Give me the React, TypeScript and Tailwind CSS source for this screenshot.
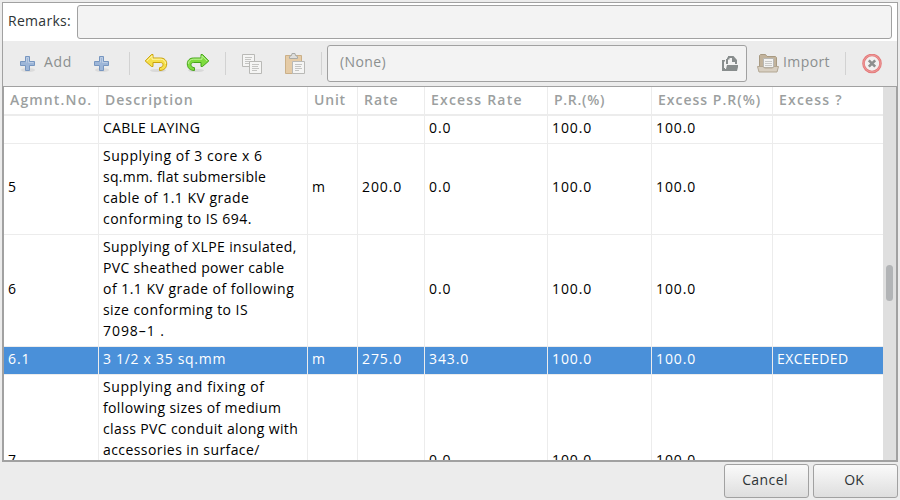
import React from 'react';

const GRID = 'grid grid-cols-[95px_209px_50px_67px_123px_104px_121px_110px]';

type Line = [text: string, tracking: string];

type Row = {
  no: string;
  desc: Line[];
  unit?: string;
  rate?: string;
  excess: string;
  pr: string;
  epr: string;
  flag?: string;
  selected?: boolean;
  height: string;
};

const rows: Row[] = [
  { no: '', desc: [['CABLE LAYING', 'tracking-[0.25px]']], excess: '0.0', pr: '100.0', epr: '100.0', height: 'h-[28px]' },
  {
    no: '5',
    desc: [
      ['Supplying of 3 core x 6', 'tracking-[0.55px]'],
      ['sq.mm. flat submersible', 'tracking-[0.25px]'],
      ['cable of 1.1 KV grade', 'tracking-[0.48px]'],
      ['conforming to IS 694.', 'tracking-[0.48px]'],
    ],
    unit: 'm', rate: '200.0', excess: '0.0', pr: '100.0', epr: '100.0', height: 'h-[91px]',
  },
  {
    no: '6',
    desc: [
      ['Supplying of XLPE insulated,', 'tracking-[0.38px]'],
      ['PVC sheathed power cable', 'tracking-[0.34px]'],
      ['of 1.1 KV grade of following', 'tracking-[0.48px]'],
      ['size conforming to IS', 'tracking-[0.44px]'],
      ['7098–1 .', 'tracking-[0.95px]'],
    ],
    excess: '0.0', pr: '100.0', epr: '100.0', height: 'h-[112px]',
  },
  {
    no: '6.1', desc: [['3 1/2 x 35 sq.mm', 'tracking-[0.7px]']], unit: 'm', rate: '275.0', excess: '343.0', pr: '100.0', epr: '100.0',
    flag: 'EXCEEDED', selected: true, height: 'h-[28px]',
  },
  {
    no: '7',
    desc: [
      ['Supplying and fixing of', 'tracking-[0.59px]'],
      ['following sizes of medium', 'tracking-[0.37px]'],
      ['class PVC conduit along with', 'tracking-[0.37px]'],
      ['accessories in surface/', 'tracking-[0.42px]'],
    ],
    excess: '0.0', pr: '100.0', epr: '100.0', height: 'h-[175px]',
  },
];

const headers: Line[] = [
  ['Agmnt.No.', 'tracking-[1.15px]'],
  ['Description', 'tracking-[1px]'],
  ['Unit', 'tracking-[0.8px]'],
  ['Rate', 'tracking-[1px]'],
  ['Excess Rate', 'tracking-[1.2px]'],
  ['P.R.(%)', 'tracking-[0.7px]'],
  ['Excess P.R(%)', 'tracking-[1px]'],
  ['Excess ?', 'tracking-[1.2px]'],
];

function PlusIcon() {
  return (
    <svg width="18" height="20" viewBox="0 0 18 20" className="block shrink-0">
      <ellipse cx="9" cy="16" rx="7" ry="2" fill="#000" opacity=".07" />
      <path d="M6.500 2.500h4v5h5v4h-5v5h-4v-5h-5v-4h5z" fill="#9db6d8" stroke="#7796c0" strokeLinejoin="round" />
      <path d="M7.500 8.500v-5h2v5h5" fill="none" stroke="#bccde4" />
    </svg>
  );
}

function UndoIcon() {
  return (
    <svg width="24" height="22" viewBox="0 0 24 22" className="block shrink-0">
      <ellipse cx="14" cy="17.500" rx="8" ry="1.600" fill="#000" opacity=".08" />
      <path d="M1.200 8 7.500 1.500h1.500v3.500h7.500c3.600 0 6.200 2.200 6.200 5.800 0 4.200-2.700 6.700-7.200 6.700v-2.800c2.300-.2 3.500-1.300 3.500-3 0-1.500-1-2.200-2.600-2.200H9v4H7.500z" fill="#f6e04a" stroke="#c9a20c" strokeLinejoin="round" />
      <path d="M2.800 8 8 2.800v3.400h8.500c2.900 0 5 1.700 5 4.600" fill="none" stroke="#fff6ae" />
    </svg>
  );
}

function RedoIcon() {
  return (
    <svg width="24" height="22" viewBox="0 0 24 22" className="block shrink-0">
      <ellipse cx="10" cy="17.500" rx="8" ry="1.600" fill="#000" opacity=".08" />
      <path d="M22.800 8 16.500 1.500H15V5H7.500c-3.600 0-6.200 2.200-6.200 5.800 0 4.200 2.700 6.700 7.200 6.700v-2.800c-2.300-.2-3.500-1.300-3.500-3 0-1.500 1-2.200 2.600-2.200H15v4h1.500z" fill="#7fdc3f" stroke="#46a51b" strokeLinejoin="round" />
      <path d="M21.200 8 16 2.800v3.400H7.500c-2.900 0-5 1.700-5 4.600" fill="none" stroke="#c2f29d" />
    </svg>
  );
}

function CopyIcon() {
  return (
    <svg width="22" height="22" viewBox="0 0 22 22" className="block shrink-0">
      <path d="M1.500 1.500h12v12h-12z" fill="#f5f5f4" stroke="#b9b9b6" />
      <path d="M4 4.500h7M4 6.500h6M4 8.500h7M4 10.500h4" stroke="#c4c4c2" />
      <path d="M8.500 8.500h12v12h-12z" fill="#f5f5f4" stroke="#b9b9b6" />
      <path d="M11 11.500h7M11 13.500h6M11 15.500h7M11 17.500h5" stroke="#c4c4c2" />
    </svg>
  );
}

function PasteIcon() {
  return (
    <svg width="22" height="22" viewBox="0 0 22 22" className="block shrink-0">
      <path d="M1.500 2.500h16v18h-16z" fill="#e5cba6" stroke="#cbb088" strokeLinejoin="round" />
      <path d="M5.500 5.500v-2l2-1 .5-2h3l.5 2 2 1v2z" fill="#dededc" stroke="#a9aaa7" strokeLinejoin="round" />
      <path d="M8.500 8.500h12v12h-12z" fill="#f5f5f4" stroke="#b9b9b6" />
      <path d="M11 11.500h7M11 13.500h6M11 15.500h7M11 17.500h4" stroke="#c4c4c2" />
    </svg>
  );
}

function OpenIcon() {
  return (
    <svg width="16" height="15" viewBox="0 0 16 15" className="block shrink-0">
      <path d="M0 4h3v1.500H2V12h1v3H0z" fill="#888d8d" />
      <path d="M4 8V3h1V1.500h1V0h5.500L15 4v4h-2V6h-3V2H7.500v1.500H6V8z" fill="#888d8d" />
      <path d="M5 9h11v2l-1 4H2.500v-2H4z" fill="#888d8d" />
    </svg>
  );
}

function ImportIcon() {
  return (
    <svg width="24" height="20" viewBox="0 0 24 20" className="block shrink-0">
      <path d="M3.500 14V1.500l1-1h5l1.500 2h8.500l1 1V14z" fill="#c2b39c" stroke="#a89a82" />
      <path d="M7.500 4.500h10v9h-10z" fill="#f3f3f2" stroke="#b8b8b5" />
      <path d="M9 7.500h7M9 9.500h7M9 11.500h7" stroke="#c9c9c7" />
      <path d="M1.500 12.500h5.500l1.500 1.500h8l1.500-1.500h4.500l-1.500 5.500H3z" fill="#d8cfc1" stroke="#b3a793" strokeLinejoin="round" />
    </svg>
  );
}

function CloseIcon() {
  return (
    <svg width="20" height="20" viewBox="0 0 20 20" className="block shrink-0">
      <circle cx="10" cy="9.500" r="8.500" fill="#f2f0f0" stroke="#e47a7a" strokeWidth="2.600" />
      <circle cx="10" cy="9.500" r="8.400" fill="none" stroke="#efa0a0" strokeWidth=".8" />
      <path d="m6.800 6.300 6.400 6.400m0-6.400-6.400 6.400" stroke="#8d8f8e" strokeWidth="2.600" />
    </svg>
  );
}

function Sep({ className }: { className: string }) {
  return <div className={`h-[23px] w-px shrink-0 bg-[#d2d2d2] ${className}`} />;
}

function Cell({ text, last }: { text?: string; last?: boolean }) {
  return (
    <div className={`flex items-center whitespace-pre pb-[5px] pl-[4px] ${last ? 'tracking-[0.4px]' : 'border-r border-[#ececec] tracking-[0.9px]'}`}>
      {text}
    </div>
  );
}

export default function App() {
  return (
    <div className="flex h-[500px] w-[900px] flex-col overflow-hidden bg-[#ececec] pl-[2px] pr-[2px] pt-[2px] font-['Open_Sans','Noto_Sans',sans-serif] text-[14px] leading-[21px] text-black">
      <div className="flex h-[460px] w-[896px] shrink-0 flex-col border border-[#a1a1a1] bg-white">
        <div className="flex h-[38px] shrink-0 items-start pl-[5px] pt-[2px]">
          <span className="mt-[5px] w-[69px] whitespace-pre tracking-[0.3px] text-[#2e3436]">Remarks:</span>
          <div className="h-[34px] w-[815px] rounded-[3px] border border-[#a1a1a1] bg-[#f3f3f3]" />
        </div>

        <div className="flex h-[45px] shrink-0 items-center bg-[#ececec] text-[#8b8f8f]">
          <div className="ml-[16px]"><PlusIcon /></div>
          <span className="ml-[7px] w-[28px] whitespace-pre pb-[5px] tracking-[0.7px]">Add</span>
          <div className="ml-[21px]"><PlusIcon /></div>
          <Sep className="ml-[18px]" />
          <div className="ml-[14px]"><UndoIcon /></div>
          <div className="ml-[18px]"><RedoIcon /></div>
          <Sep className="ml-[15px]" />
          <div className="ml-[15px]"><CopyIcon /></div>
          <div className="ml-[21px]"><PasteIcon /></div>
          <Sep className="ml-[15px]" />
          <div className="ml-[5px] flex h-[37px] w-[420px] shrink-0 items-center justify-between rounded-[3px] border border-[#a1a1a1] bg-[#f3f3f3] pl-[12px] pr-[8px]">
            <span className="pb-[5px] tracking-[0.4px]">(None)</span>
            <OpenIcon />
          </div>
          <div className="ml-[9px]"><ImportIcon /></div>
          <span className="ml-[3px] w-[47px] whitespace-pre pb-[5px] tracking-[0.4px]">Import</span>
          <Sep className="ml-[15px]" />
          <div className="ml-[16px]"><CloseIcon /></div>
        </div>

        <div className="flex h-[375px] shrink-0 border border-[#a1a1a1]">
          <div className="flex w-[879px] flex-col overflow-hidden">
            <div className={`${GRID} h-[29px] shrink-0 border-b-2 border-[#ececec] font-semibold text-[#9c9f9f]`}>
              {headers.map(([text, tracking], i) => (
                <div key={text} className={`whitespace-pre pl-[6px] pt-[2px] ${tracking} ${i < 7 ? 'border-r border-[#ececec]' : ''}`}>
                  {text}
                </div>
              ))}
            </div>
            {rows.map((r) => (
              <div key={r.no} className={`${GRID} ${r.height} shrink-0 border-b border-[#ececec] ${r.selected ? 'bg-[#4a90d9] text-white' : 'bg-white'}`}>
                <Cell text={r.no} />
                <div className="border-r border-[#ececec] pl-[4px] pt-px">
                  {r.desc.map(([text, tracking]) => (
                    <div key={text} className={`whitespace-pre ${tracking}`}>{text}</div>
                  ))}
                </div>
                <Cell text={r.unit} />
                <Cell text={r.rate} />
                <Cell text={r.excess} />
                <Cell text={r.pr} />
                <Cell text={r.epr} />
                <Cell text={r.flag} last />
              </div>
            ))}
          </div>
          <div className="flex w-[13px] justify-center bg-[#dfdfdf] pt-[178px]">
            <div className="h-[36px] w-[7px] rounded-full bg-[#b2b4b6]" />
          </div>
        </div>
      </div>

      <div className="mt-[2px] flex justify-end gap-[4px] text-[#2e3436]">
        <button className="h-[34px] w-[85px] rounded-[3px] border border-[#a1a1a1] bg-linear-to-b from-[#fafafa] to-[#dedede] pb-[4px] pr-[3px] tracking-[0.4px]">Cancel</button>
        <button className="h-[34px] w-[85px] rounded-[3px] border border-[#a1a1a1] bg-linear-to-b from-[#fafafa] to-[#dedede] pb-[4px] pr-[3px]">OK</button>
      </div>
    </div>
  );
}
